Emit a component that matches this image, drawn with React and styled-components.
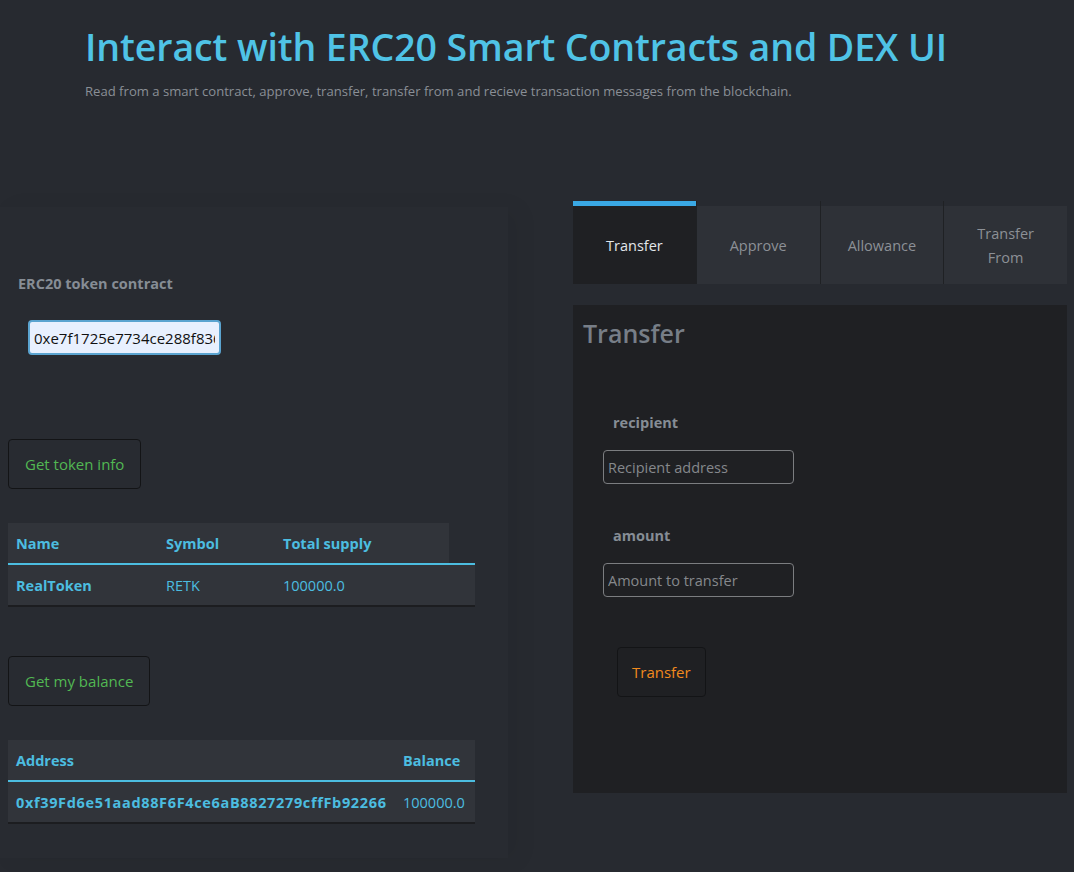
import React from "react";
import styled, { createGlobalStyle } from "styled-components";

const Global = createGlobalStyle`
  html, body { margin: 0; padding: 0; background: #272a30; }
  body { font-family: "Open Sans", "Noto Sans", sans-serif; color: #c9ccd1; }
  * { box-sizing: border-box; }
`;

const Page = styled.div`
  width: 1074px;
  min-height: 872px;
  background: #272a30;
`;

const Header = styled.header`
  padding: 21px 0 0 85px;
  height: 201px;
`;

const Title = styled.h1`
  margin: 0;
  font-size: 37.5px;
  line-height: 52px;
  font-weight: 600;
  color: #4fc3e6;
  letter-spacing: -0.1px;
`;

const Subtitle = styled.p`
  margin: 9px 0 0;
  font-size: 13.1px;
  line-height: 18px;
  color: #8a8f96;
`;

const Main = styled.main`
  display: grid;
  grid-template-columns: 508px 494px;
  column-gap: 65px;
  align-items: start;
`;

const Card = styled.section`
  margin-top: 6px;
  height: 651px;
  background: #282b31;
  box-shadow: 10px 2px 22px rgba(0, 0, 0, 0.05);
  padding: 66px 0 0 8px;
  display: flex;
  flex-direction: column;
  align-items: flex-start;
`;

const FieldLabel = styled.label`
  display: block;
  font-size: 14.5px;
  font-weight: 700;
  color: #868d95;
  line-height: 22px;
  padding-left: ${(p) => p.$indent || 0}px;
`;

const AddressInput = styled.input`
  margin: 25px 0 0 20px;
  width: 193px;
  height: 35px;
  border: 2px solid #5ba4d0;
  border-radius: 4px;
  background: #e8f0fe;
  color: #111;
  font-family: "Open Sans", sans-serif;
  font-size: 15px;
  padding: 0 4px;
  outline: none;
`;

const GhostButton = styled.button`
  margin-top: ${(p) => p.$top}px;
  margin-left: ${(p) => p.$left || 0}px;
  height: 50px;
  padding: 0 ${(p) => p.$pad || 16}px;
  background: transparent;
  border: 1px solid #131416;
  border-radius: 4px;
  color: ${(p) => p.$color};
  font-family: "Open Sans", sans-serif;
  font-size: 15px;
  cursor: pointer;
`;

const Table = styled.div`
  margin-top: ${(p) => p.$top}px;
  width: 467px;
  display: grid;
  grid-template-columns: ${(p) => p.$cols};
  color: #4cbde0;
  font-size: 14.5px;
`;

const HeadCell = styled.div`
  height: 42px;
  display: flex;
  align-items: center;
  padding-left: 8px;
  font-weight: 700;
  background: ${(p) => (p.$empty ? "transparent" : "#31343a")};
  border-bottom: 2px solid #4cbde0;
`;

const Cell = styled.div`
  height: 42px;
  display: flex;
  align-items: center;
  padding-left: 8px;
  font-weight: ${(p) => (p.$bold ? 700 : 400)};
  letter-spacing: ${(p) => p.$spacing || 0}px;
  background: #31343a;
  border-bottom: 2px solid #1c1d20;
  white-space: nowrap;
`;

const Right = styled.section`
  display: flex;
  flex-direction: column;
`;

const Tabs = styled.div`
  display: grid;
  grid-template-columns: repeat(4, 1fr);
  gap: 1px;
  background: #1f2124;
`;

const Tab = styled.button`
  height: 83px;
  border: none;
  border-top: 5px solid ${(p) => (p.$active ? "#3aa8e4" : "#272a30")};
  background: ${(p) => (p.$active ? "#1f2023" : "#2e3137")};
  color: ${(p) => (p.$active ? "#e2e6ea" : "#8c9096")};
  font-family: "Open Sans", sans-serif;
  font-size: 14.5px;
  line-height: 24px;
  padding: 2px 8px 0;
  cursor: pointer;
`;

const Panel = styled.div`
  margin-top: 21px;
  height: 488px;
  background: #1f2023;
  padding: 11px 10px 0;
`;

const PanelTitle = styled.h2`
  margin: 0;
  font-size: 25px;
  font-weight: 600;
  line-height: 34px;
  color: #777e87;
`;

const Form = styled.form`
  margin-top: 62px;
  padding-left: 20px;
  display: flex;
  flex-direction: column;
  align-items: flex-start;
`;

const TextInput = styled.input`
  margin-top: ${(p) => p.$top}px;
  width: 191px;
  height: 34px;
  border: 1px solid #7b7d80;
  border-radius: 4px;
  background: transparent;
  color: #ddd;
  font-family: "Open Sans", sans-serif;
  font-size: 14.5px;
  padding: 0 4px;
  outline: none;
  &::placeholder { color: #85888c; }
`;

export default function App() {
  return (
    <Page>
      <Global />
      <Header>
        <Title>Interact with ERC20 Smart Contracts and DEX UI</Title>
        <Subtitle>
          Read from a smart contract, approve, transfer, transfer from and recieve transaction messages from the blockchain.
        </Subtitle>
      </Header>
      <Main>
        <Card>
          <FieldLabel $indent={10}>ERC20 token contract</FieldLabel>
          <AddressInput defaultValue="0xe7f1725e7734ce288f8367e1bb143e90bb3f0512" />
          <GhostButton $top={84} $color="#52b853">Get token info</GhostButton>
          <Table $top={34} $cols="150px 117px 174px 26px">
            <HeadCell>Name</HeadCell>
            <HeadCell>Symbol</HeadCell>
            <HeadCell>Total supply</HeadCell>
            <HeadCell $empty />
            <Cell $bold>RealToken</Cell>
            <Cell>RETK</Cell>
            <Cell>100000.0</Cell>
            <Cell />
          </Table>
          <GhostButton $top={49} $color="#52b853">Get my balance</GhostButton>
          <Table $top={34} $cols="387px 80px">
            <HeadCell>Address</HeadCell>
            <HeadCell>Balance</HeadCell>
            <Cell $bold $spacing={0.65}>0xf39Fd6e51aad88F6F4ce6aB8827279cffFb92266</Cell>
            <Cell>100000.0</Cell>
          </Table>
        </Card>
        <Right>
          <Tabs>
            <Tab $active>Transfer</Tab>
            <Tab>Approve</Tab>
            <Tab>Allowance</Tab>
            <Tab>Transfer<br />From</Tab>
          </Tabs>
          <Panel>
            <PanelTitle>Transfer</PanelTitle>
            <Form onSubmit={(e) => e.preventDefault()}>
              <FieldLabel $indent={10}>recipient</FieldLabel>
              <TextInput $top={16} placeholder="Recipient address" />
              <FieldLabel $indent={10} style={{ marginTop: 41 }}>amount</FieldLabel>
              <TextInput $top={16} placeholder="Amount to transfer" />
              <GhostButton $top={50} $left={14} $pad={14} $color="#f28a1e">Transfer</GhostButton>
            </Form>
          </Panel>
        </Right>
      </Main>
    </Page>
  );
}
